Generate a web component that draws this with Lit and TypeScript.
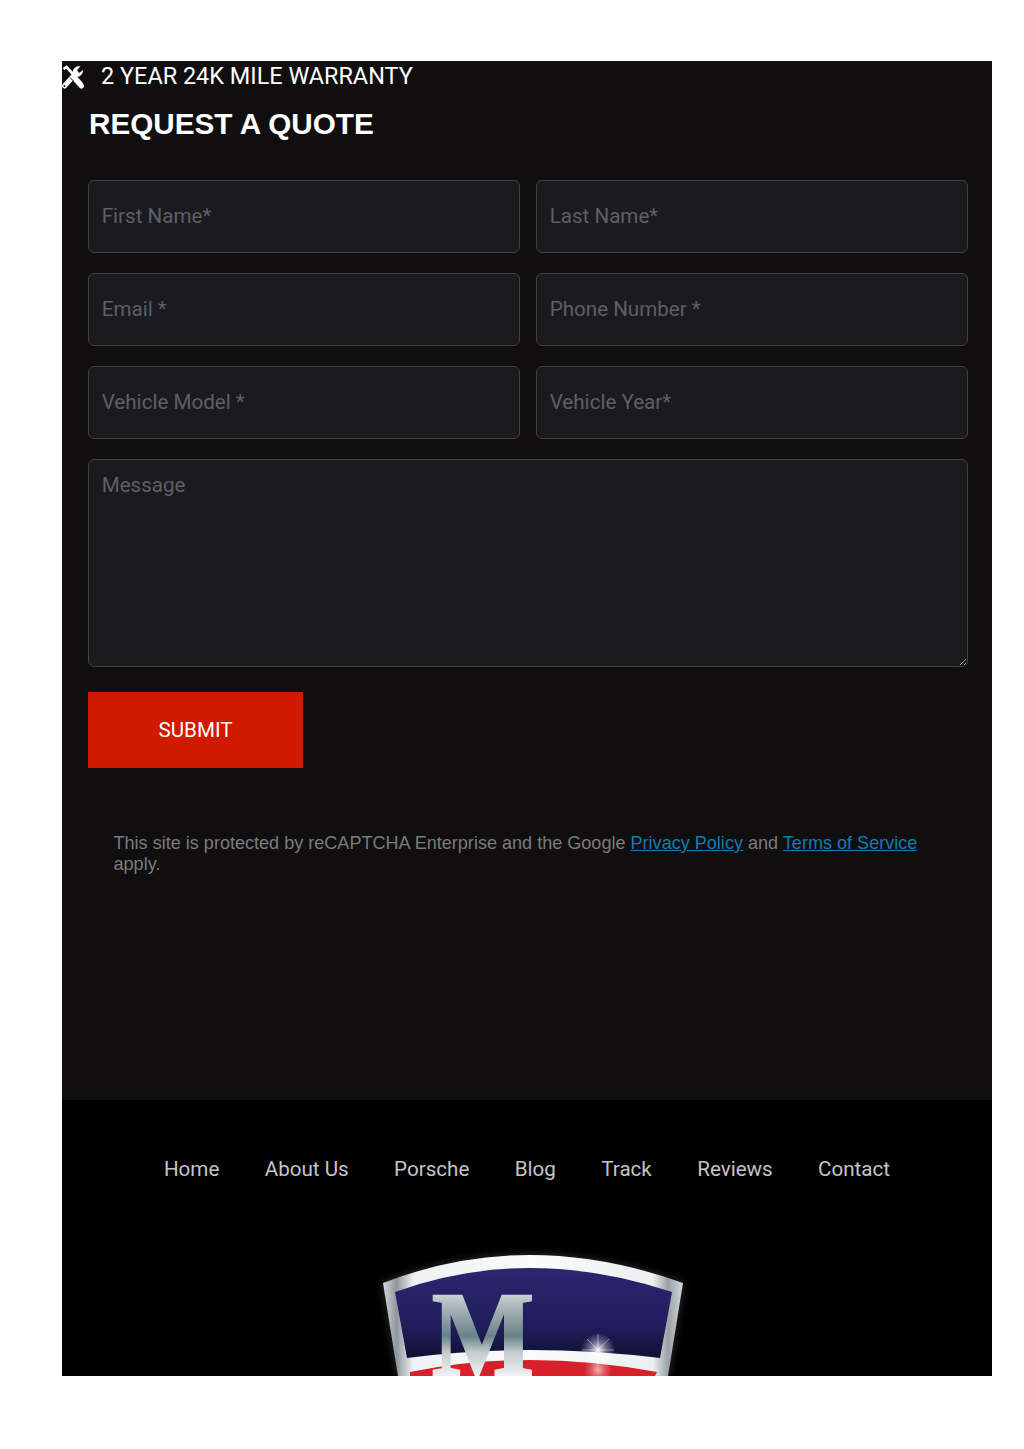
import { LitElement, html, css } from "lit";
import { customElement } from "lit/decorators.js";

@customElement("app-root")
export class AppRoot extends LitElement {
  static styles = css`
    :host { display: block; background: #fff; padding: 61px 32px 73px 62px; height: 1449px; box-sizing: border-box; font-family: Roboto, sans-serif; }
    .panel { background: #110e0f; height: 1039px; box-sizing: border-box; }
    .warranty { display: flex; align-items: center; gap: 17px; height: 32px; color: #fff; font-size: 23.45px; line-height: 30px; }
    .warranty svg { flex: none; }
    .warranty span { padding-bottom: 2px; }
    .body { padding: 0 24px 0 26px; }
    h2 { margin: 13px 0 38px 1px; color: #fff; font: bold 29.7px/36px "Liberation Sans", Arial, sans-serif; }
    form { display: grid; grid-template-columns: 432px 432px; gap: 20px 16px; }
    input, textarea {
      box-sizing: border-box; width: 100%; background: #1b1b1f; border: 1px solid #3f3f42; border-radius: 6px;
      color: #fff; font: 20.6px Roboto, sans-serif; padding: 0 13px 2px 12.7px; outline: none; margin: 0; display: block;
    }
    input { height: 73px; }
    textarea { grid-column: 1 / -1; height: 208px; padding: 13px 13px 13px 12.7px; resize: vertical; line-height: 25px; }
    input::placeholder, textarea::placeholder { color: #5e5e67; opacity: 1; }
    button {
      display: block; width: 215px; height: 76px; margin-top: 25px; border: 0; background: #cf1a00; color: #fff;
      font: 20.6px Roboto, sans-serif; padding: 0;
    }
    .legal { margin: 65px 0 0 25.5px; width: 830px; color: #7a7b7e; font: 18.07px/21px "Liberation Sans", Arial, sans-serif; }
    .legal a { color: #0b7fb0; }
    footer { background: #000; height: 276px; overflow: hidden; display: flex; flex-direction: column; align-items: center; }
    nav { display: flex; gap: 45.4px; margin-top: 54px; height: 30px; font-size: 20.6px; line-height: 30px; }
    nav a { color: #c4c4c4; text-decoration: none; }
    .logo { flex: none; margin-top: 56px; }
  `;

  render() {
    return html`
      <section class="panel">
        <div class="warranty">
          <svg width="22" height="24" viewBox="0 0 22 24">
            <path d="M1.500 4 L4.500 2 L20 19" fill="none" stroke="#fff" stroke-width="2.600" />
            <path d="M13 14 L19.500 21" fill="none" stroke="#fff" stroke-width="5" stroke-linecap="round" />
            <path d="M2.500 21 L12 10.500" fill="none" stroke="#fff" stroke-width="5" stroke-linecap="round" />
            <path d="M10.500 8 A6.500 6.500 0 0 1 18.500 1.500 L15 5 L17 8 L21 5 A6.500 6.500 0 0 1 14 12Z" fill="#fff" />
            <path d="M8 12.500 L11.500 16" fill="none" stroke="#110e0f" stroke-width="1" />
            <circle cx="2.500" cy="21" r="1" fill="#110e0f" />
          </svg>
          <span>2 YEAR 24K MILE WARRANTY</span>
        </div>
        <div class="body">
          <h2>REQUEST A QUOTE</h2>
          <form @submit=${(e: Event) => e.preventDefault()}>
            <input placeholder="First Name*" />
            <input placeholder="Last Name*" />
            <input placeholder="Email *" />
            <input placeholder="Phone Number *" />
            <input placeholder="Vehicle Model *" />
            <input placeholder="Vehicle Year*" />
            <textarea placeholder="Message"></textarea>
          </form>
          <button type="button">SUBMIT</button>
          <p class="legal">
            This site is protected by reCAPTCHA Enterprise and the Google
            <a href="#">Privacy Policy</a> and <a href="#">Terms of Service</a> apply.
          </p>
        </div>
      </section>
      <footer>
        <nav>
          <a href="#">Home</a><a href="#">About Us</a><a href="#">Porsche</a><a href="#">Blog</a><a href="#">Track</a><a href="#">Reviews</a><a href="#">Contact</a>
        </nav>
        <svg class="logo" width="334" height="136" viewBox="0 0 334 136">
          <defs>
            <linearGradient id="chrome" x1="0" y1="0" x2="1" y2="0">
              <stop offset="0" stop-color="#d5d9dc" />
              <stop offset=".045" stop-color="#8f979c" />
              <stop offset=".1" stop-color="#eef0f1" />
              <stop offset=".5" stop-color="#fbfbfb" />
              <stop offset=".9" stop-color="#eceeef" />
              <stop offset=".95" stop-color="#9aa1a5" />
              <stop offset="1" stop-color="#d6d9dc" />
            </linearGradient>
            <linearGradient id="navy" x1="0" y1="0" x2="0" y2="1">
              <stop offset="0" stop-color="#2a2670" />
              <stop offset=".65" stop-color="#201e5c" />
              <stop offset="1" stop-color="#101033" />
            </linearGradient>
            <linearGradient id="m" gradientUnits="userSpaceOnUse" x1="0" y1="-81" x2="0" y2="0">
              <stop offset="0" stop-color="#cdd2d4" />
              <stop offset=".2" stop-color="#a3b0b5" />
              <stop offset=".52" stop-color="#68828a" />
              <stop offset=".72" stop-color="#c3cbce" />
              <stop offset="1" stop-color="#eef0f1" />
            </linearGradient>
            <radialGradient id="spark">
              <stop offset="0" stop-color="#fff" stop-opacity=".95" />
              <stop offset=".5" stop-color="#fff" stop-opacity=".35" />
              <stop offset="1" stop-color="#fff" stop-opacity="0" />
            </radialGradient>
            <filter id="halo" x="-10%" y="-10%" width="120%" height="120%">
              <feGaussianBlur stdDeviation="5" />
            </filter>
          </defs>
          <path d="M23 43 Q167 -13 323 43 L308 136 H38 Z" fill="#6d7074" opacity=".45" filter="url(#halo)" />
          <path d="M23 43 Q167 -13 323 43 L308 136 H38 Z" fill="url(#chrome)" />
          <path d="M35 52 Q167 4 312 52 L300 118 Q167 102 47 118 Z" fill="url(#navy)" />
          <path d="M50 132 Q167 108 297 132 L295 136 H50 Z" fill="#d8202b" />
          <text transform="translate(123 135) scale(0.9 1)" text-anchor="middle" font-family="Liberation Serif" font-weight="700" font-size="120" fill="url(#m)" stroke="url(#m)" stroke-width="2.500">M</text>
          <circle cx="238" cy="110" r="17" fill="url(#spark)" />
          <circle cx="238" cy="130" r="14" fill="url(#spark)" opacity=".7" />
          <path d="M238 94 V126 M222 110 H254 M227 99 L249 121 M249 99 L227 121" stroke="#fff" stroke-width=".6" opacity=".7" />
        </svg>
      </footer>
    `;
  }
}
